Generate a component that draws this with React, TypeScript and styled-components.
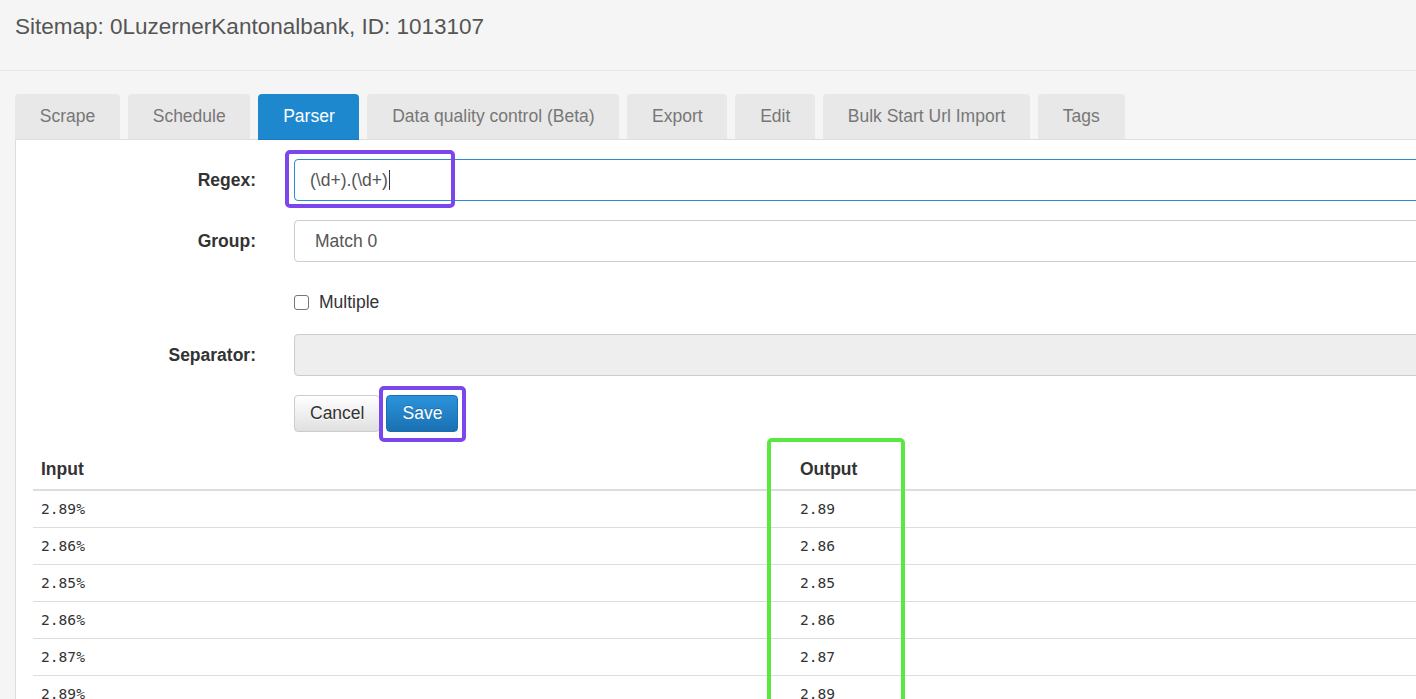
import React from "react";
import styled, { createGlobalStyle, css } from "styled-components";

const GlobalStyle = createGlobalStyle`
  html, body {
    margin: 0;
    padding: 0;
    background: #f5f5f5;
    overflow: hidden;
  }
  body {
    font-family: "Liberation Sans", Arial, Helvetica, sans-serif;
    font-size: 17.5px;
    color: #333;
  }
  * { box-sizing: border-box; }
`;

const Page = styled.div`
  width: 1416px;
  height: 699px;
  overflow: hidden;
`;

const Header = styled.header`
  height: 71px;
  padding: 14px 15px 0;
  border-bottom: 1px solid #e6e6e6;
`;

const Title = styled.h4`
  margin: 0;
  font-size: 22.5px;
  line-height: 25px;
  font-weight: normal;
  color: #555;
`;

const Main = styled.main`
  padding: 23px 0 0 15px;
  width: 1700px;
`;

const TabBar = styled.nav`
  display: flex;
  gap: 8px;
  border-bottom: 1px solid #ddd;
`;

const Tab = styled.div<{ $active?: boolean }>`
  height: 46px;
  margin-bottom: -1px;
  padding: 0 24.75px;
  line-height: 45px;
  font-size: 17.5px;
  border-radius: 4px 4px 0 0;
  background: #e8e8e8;
  color: #777;
  border-bottom: 1px solid #ddd;
  white-space: nowrap;
  ${(p) =>
    p.$active &&
    css`
      background: #1e88cf;
      color: #fff;
      border-bottom-color: #1b7cc0;
    `}
`;

const Panel = styled.section`
  background: #fff;
  border-left: 1px solid #ddd;
  padding-top: 19px;
  min-height: 600px;
`;

const Form = styled.div`
  display: grid;
  grid-template-columns: 240px 1fr;
  column-gap: 38px;
  row-gap: 19px;
  align-items: center;
`;

const Label = styled.label`
  text-align: right;
  font-weight: bold;
  font-size: 17.5px;
  color: #333;
`;

const FieldCell = styled.div`
  position: relative;
`;

const fieldBase = css`
  display: block;
  width: 100%;
  height: 42px;
  border: 1px solid #ccc;
  border-radius: 4px;
  font-family: "Liberation Sans", Arial, sans-serif;
  font-size: 17.5px;
  color: #555;
  background: #fff;
`;

const FocusedField = styled.div`
  ${fieldBase};
  border-color: #2a8bd1;
  padding: 0 15px;
  line-height: 40px;
  display: flex;
  align-items: center;
`;

const Caret = styled.span`
  display: inline-block;
  width: 1px;
  height: 20px;
  background: #333;
  margin-left: 1px;
`;

const Select = styled.select`
  ${fieldBase};
  appearance: none;
  padding: 0 20px;
`;

const TextInput = styled.input`
  ${fieldBase};
  padding: 0 15px;
  &:disabled {
    background: #eee;
  }
`;

const CheckRow = styled.label`
  display: flex;
  align-items: center;
  gap: 10px;
  height: 34px;
  padding-top: 9px;
  line-height: 25px;
  font-size: 17.5px;
  color: #333;
`;

const Checkbox = styled.input`
  appearance: none;
  width: 15px;
  height: 15px;
  margin: 0;
  border: 1px solid #767676;
  border-radius: 3px;
  background: #fff;
`;

const Buttons = styled.div`
  display: flex;
  gap: 6px;
`;

const Button = styled.button<{ $primary?: boolean }>`
  height: 37px;
  padding: 0 15px;
  border-radius: 4px;
  font-family: "Liberation Sans", Arial, sans-serif;
  font-size: 17.5px;
  border: 1px solid #ccc;
  color: #333;
  background: linear-gradient(#ffffff, #e0e0e0);
  text-shadow: 0 1px 0 #fff;
  ${(p) =>
    p.$primary &&
    css`
      color: #fff;
      border-color: #1b6fae;
      background: linear-gradient(#2b93db, #1a71b2);
      text-shadow: 0 -1px 0 rgba(0, 0, 0, 0.2);
    `}
`;

const Highlight = styled.div<{ $color: string }>`
  position: absolute;
  border: 4px solid ${(p) => p.$color};
  border-radius: 5px;
  pointer-events: none;
`;

const SaveWrap = styled.span`
  position: relative;
  display: inline-flex;
`;

const TableWrap = styled.div`
  position: relative;
  margin: 15px 0 0 17px;
`;

const Table = styled.table`
  border-collapse: collapse;
  width: 1600px;
`;

const Th = styled.th`
  text-align: left;
  font-weight: bold;
  font-size: 17.5px;
  color: #333;
  padding: 10px 8px 7px;
  line-height: 25px;
  border-bottom: 2px solid #ddd;
  &:first-child {
    width: 759px;
  }
`;

const Td = styled.td`
  padding: 8px;
  height: 37px;
  line-height: 20px;
  font-family: "DejaVu Sans Mono", "Liberation Mono", monospace;
  font-size: 14.6px;
  color: #333;
  border-top: 1px solid #ddd;
  tr:first-child > & {
    border-top: none;
    height: 36px;
  }
`;

const rows = [
  ["2.89%", "2.89"],
  ["2.86%", "2.86"],
  ["2.85%", "2.85"],
  ["2.86%", "2.86"],
  ["2.87%", "2.87"],
  ["2.89%", "2.89"],
];

const tabs = [
  "Scrape",
  "Schedule",
  "Parser",
  "Data quality control (Beta)",
  "Export",
  "Edit",
  "Bulk Start Url Import",
  "Tags",
];

export default function App() {
  return (
    <Page>
      <GlobalStyle />
      <Header>
        <Title>Sitemap: 0LuzernerKantonalbank, ID: 1013107</Title>
      </Header>
      <Main>
        <TabBar>
          {tabs.map((t) => (
            <Tab key={t} $active={t === "Parser"}>
              {t}
            </Tab>
          ))}
        </TabBar>
        <Panel>
          <Form>
            <Label>Regex:</Label>
            <FieldCell>
              <FocusedField>
                (\d+).(\d+)
                <Caret />
              </FocusedField>
              <Highlight
                $color="#7b46ec"
                style={{ left: -9, top: -9, width: 170, height: 58 }}
              />
            </FieldCell>

            <Label>Group:</Label>
            <FieldCell>
              <Select defaultValue="0">
                <option value="0">Match 0</option>
                <option value="1">Match 1</option>
                <option value="2">Match 2</option>
              </Select>
            </FieldCell>

            <span />
            <CheckRow>
              <Checkbox type="checkbox" />
              Multiple
            </CheckRow>

            <Label>Separator:</Label>
            <FieldCell>
              <TextInput disabled />
            </FieldCell>

            <span />
            <Buttons>
              <Button>Cancel</Button>
              <SaveWrap>
                <Button $primary>Save</Button>
                <Highlight
                  $color="#7b46ec"
                  style={{ left: -7, top: -9, width: 87, height: 56 }}
                />
              </SaveWrap>
            </Buttons>
          </Form>

          <TableWrap>
            <Table>
              <thead>
                <tr>
                  <Th>Input</Th>
                  <Th>Output</Th>
                </tr>
              </thead>
              <tbody>
                {rows.map(([i, o], idx) => (
                  <tr key={idx}>
                    <Td>{i}</Td>
                    <Td>{o}</Td>
                  </tr>
                ))}
              </tbody>
            </Table>
            <Highlight
              $color="#58e83f"
              style={{ left: 734, top: -9, width: 138, height: 400 }}
            />
          </TableWrap>
        </Panel>
      </Main>
    </Page>
  );
}
